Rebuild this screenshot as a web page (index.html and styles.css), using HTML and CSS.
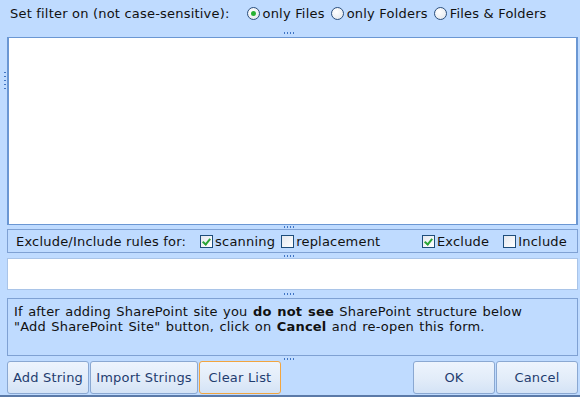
FILE: index.html
```html
<!DOCTYPE html>
<html>
<head>
<title>Filter Settings</title>
<link rel="stylesheet" href="styles.css">
</head>
<body>

<div class="filter-row">
  <span class="filter-label">Set filter on (not case-sensitive):</span>
  <label class="opt"><span class="radio checked"></span>only Files</label>
  <label class="opt"><span class="radio"></span>only Folders</label>
  <label class="opt"><span class="radio"></span>Files &amp; Folders</label>
</div>

<div class="split split-top"><span class="grip"></span></div>

<div class="list-wrap">
  <span class="side-grip"></span>
  <div class="list"></div>
</div>

<div class="split split-a"><span class="grip"></span></div>

<div class="rules">
  <span class="rules-label">Exclude/Include rules for:</span>
  <label class="opt"><span class="check checked"></span>scanning</label>
  <label class="opt"><span class="check"></span>replacement</label>
  <span class="spacer"></span>
  <label class="opt opt-wide"><span class="check checked"></span>Exclude</label>
  <label class="opt"><span class="check"></span>Include</label>
</div>

<div class="split split-b"><span class="grip"></span></div>

<div class="text-input"></div>

<div class="split split-c"><span class="grip"></span></div>

<div class="info">
  If after adding SharePoint site you <b>do not see</b> SharePoint structure below<br>
  "Add SharePoint Site" button, click on <b>Cancel</b> and re-open this form.
</div>

<div class="split split-d"><span class="grip"></span></div>

<div class="buttons">
  <button class="btn btn-add">Add String</button>
  <button class="btn btn-import">Import Strings</button>
  <button class="btn btn-clear">Clear List</button>
  <span class="spacer"></span>
  <button class="btn btn-ok">OK</button>
  <button class="btn btn-cancel">Cancel</button>
</div>

</body>
</html>
```

FILE: styles.css
```css
html, body {
  height: 100%;
}

body {
  margin: 0;
  background: #bfdbff;
  font: normal 13px "DejaVu Sans", Verdana, sans-serif;
  letter-spacing: 0.2px;
  color: #111;
  overflow: hidden;
  box-sizing: border-box;
  border-bottom: 2px solid #5b7aa8;
}

.filter-row {
  display: flex;
  align-items: center;
  height: 26px;
  padding-left: 10px;
}

.filter-label {
  margin-right: 17px;
}

.opt {
  display: flex;
  align-items: center;
  margin-right: 6px;
}

.radio {
  width: 11px;
  height: 11px;
  border: 1px solid #2c4f7c;
  border-radius: 50%;
  background: radial-gradient(circle at 40% 35%, #ffffff, #dfe4ea);
  margin-right: 3px;
  display: flex;
  align-items: center;
  justify-content: center;
}

.radio.checked::after {
  content: "";
  width: 5px;
  height: 5px;
  border-radius: 50%;
  background: #27b233;
}

.check {
  width: 11px;
  height: 11px;
  border: 1px solid #1e4d7a;
  background: linear-gradient(135deg, #e4e8ee, #ffffff);
  margin-right: 2px;
  position: relative;
}

.check.checked::after {
  content: "";
  position: absolute;
  left: 3px;
  top: 1px;
  width: 3px;
  height: 6px;
  border: solid #2aa536;
  border-width: 0 2px 2px 0;
  transform: rotate(40deg);
}

.split {
  display: flex;
  justify-content: center;
  align-items: center;
}

.split-top {
  height: 11px;
  align-items: flex-end;
  padding-bottom: 3px;
  box-sizing: border-box;
}

.split-a { height: 4px; }
.split-b { height: 5px; }
.split-c { height: 8px; }
.split-d { height: 5px; }

.grip {
  width: 12px;
  height: 2px;
  background: repeating-linear-gradient(90deg, #3f74c4 0 1px, transparent 1px 3px);
}

.list-wrap {
  display: flex;
  height: 188px;
  margin-right: 2px;
}

.side-grip {
  width: 7px;
  height: 18px;
  margin-top: 35px;
  background: repeating-linear-gradient(180deg, #3f74c4 0 1px, transparent 1px 4px);
  background-size: 2px 100%;
  background-repeat: no-repeat;
  background-position: 4px 0;
}

.list {
  flex: 1;
  background: #fff;
  border: 1px solid #6b97d3;
  border-width: 1px 2px 1px 2px;
}

.rules {
  display: flex;
  align-items: center;
  height: 22px;
  margin: 0 2px 0 7px;
  padding: 0 10px 0 8px;
  border: 1px solid #7fa1d3;
}

.rules-label {
  margin-right: 14px;
}

.rules .opt {
  margin-right: 6px;
}

.rules .opt-wide {
  margin-right: 14px;
}

.rules .opt:last-child {
  margin-right: 0;
}

.spacer {
  flex: 1;
}

.text-input {
  height: 30px;
  margin: 0 2px 0 7px;
  background: #fff;
  border: 1px solid #a9c4e8;
}

.info {
  height: 46px;
  margin: 0 2px 0 7px;
  padding: 5px 0 5px 6px;
  border: 1px solid #7fa1d3;
  line-height: 15px;
  word-spacing: 1px;
}

.buttons {
  display: flex;
  height: 33px;
  margin: 0 2px 0 7px;
  gap: 1px;
}

.btn {
  font: normal 13px "DejaVu Sans", Verdana, sans-serif;
  letter-spacing: 0.2px;
  color: #1f3d70;
  background: linear-gradient(180deg, #edf4fd 0%, #e2ecf9 55%, #d4e3f6 100%);
  border: 1px solid #8aa8d2;
  border-radius: 3px;
  padding: 0;
}

.btn-add { width: 82px; }
.btn-import { width: 108px; }
.btn-clear { width: 82px; border-color: #f2a540; }
.btn-ok { width: 82px; }
.btn-cancel { width: 82px; }
```
